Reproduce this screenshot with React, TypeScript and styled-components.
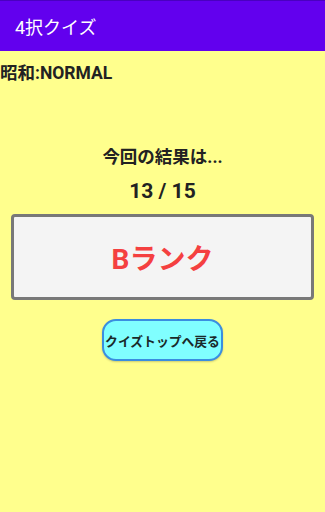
import React from "react";
import styled, { createGlobalStyle } from "styled-components";

const Global = createGlobalStyle`
  html, body { margin: 0; padding: 0; }
  body { background: #ffff8d; font-family: Roboto, "Noto Sans CJK JP", sans-serif; }
`;

const Screen = styled.div`
  width: 325px;
  height: 512px;
  background: #ffff8d;
  display: flex;
  flex-direction: column;
`;

const AppBar = styled.header`
  height: 51px;
  background: #6200ee;
  display: flex;
  align-items: center;
  padding-left: 15px;
  box-sizing: border-box;
  color: #fff;
  font-size: 18px;
  font-family: Roboto, "Noto Sans CJK JP", sans-serif;
  border-top: 1px solid #4a00c0;
`;

const Mode = styled.div`
  font-size: 17.5px;
  font-weight: bold;
  color: #222;
  margin-top: 11px;
  line-height: 22px;
`;

const Content = styled.main`
  display: flex;
  flex-direction: column;
  align-items: center;
  padding: 0 11px;
`;

const Heading = styled.div`
  margin-top: 61px;
  font-size: 17.5px;
  font-weight: bold;
  color: #222;
  line-height: 24px;
`;

const Score = styled.div`
  margin-top: 9px;
  font-size: 21px;
  font-weight: bold;
  color: #222;
  line-height: 26px;
`;

const RankBox = styled.div`
  margin-top: 10px;
  align-self: stretch;
  height: 86px;
  box-sizing: border-box;
  border: 3px solid #787878;
  border-radius: 4px;
  background: #f4f4f4;
  display: flex;
  align-items: center;
  justify-content: center;
  color: #f44040;
  font-size: 28px;
  font-weight: bold;
`;

const BackButton = styled.button`
  margin-top: 19px;
  width: 121px;
  height: 42px;
  box-sizing: border-box;
  border: 2px solid #3a8ee0;
  border-radius: 14px;
  background: #80ffff;
  color: #1a2a2a;
  font-size: 12.8px;
  font-weight: bold;
  font-family: Roboto, "Noto Sans CJK JP", sans-serif;
  padding: 0;
  white-space: nowrap;
  box-shadow: 0 1px 2px rgba(0, 0, 0, 0.2);
`;

export default function App() {
  return (
    <Screen>
      <Global />
      <AppBar>4択クイズ</AppBar>
      <Mode>昭和:NORMAL</Mode>
      <Content>
        <Heading>今回の結果は...</Heading>
        <Score>13 / 15</Score>
        <RankBox>Bランク</RankBox>
        <BackButton>クイズトップへ戻る</BackButton>
      </Content>
    </Screen>
  );
}
